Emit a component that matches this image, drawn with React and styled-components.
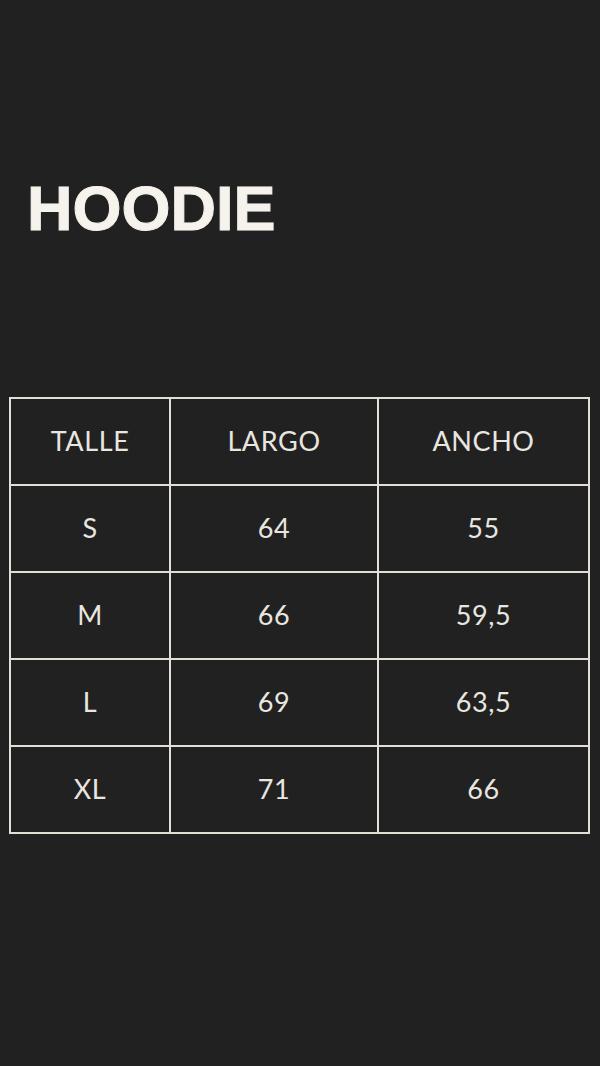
import React from "react";
import styled, { createGlobalStyle } from "styled-components";

const Global = createGlobalStyle`
  html, body {
    margin: 0;
    background: #212121;
  }
`;

const Page = styled.div`
  min-height: 1066px;
  background: #212121;
  padding-top: 177px;
  box-sizing: border-box;
`;

const Title = styled.h1`
  margin: 0 0 157px 27px;
  font-family: "Liberation Sans", Arial, sans-serif;
  font-weight: 700;
  font-size: 63px;
  line-height: 1;
  color: #f6f3ec;
  -webkit-text-stroke: 1px #f6f3ec;
`;

const Grid = styled.div`
  display: grid;
  grid-template-columns: 160px 208px 211px;
  grid-auto-rows: 87px;
  margin-left: 9px;
  width: 581px;
  border-left: 2px solid #e3dfd6;
  border-top: 2px solid #e3dfd6;
  box-sizing: border-box;
`;

const Cell = styled.div`
  display: flex;
  align-items: center;
  justify-content: center;
  border-right: 2px solid #e3dfd6;
  border-bottom: 2px solid #e3dfd6;
  font-family: Lato, "Open Sans", sans-serif;
  font-size: 27px;
  font-weight: 400;
  letter-spacing: 0.6px;
  color: #e9e6e0;
  padding-bottom: 2px;
`;

const rows = [
  ["TALLE", "LARGO", "ANCHO"],
  ["S", "64", "55"],
  ["M", "66", "59,5"],
  ["L", "69", "63,5"],
  ["XL", "71", "66"],
];

const App = () => {
  return (
    <Page>
      <Global />
      <Title>HOODIE</Title>
      <Grid>
        {rows.map((r) => r.map((c, i) => <Cell key={r[0] + i}>{c}</Cell>))}
      </Grid>
    </Page>
  );
};

export default App;
